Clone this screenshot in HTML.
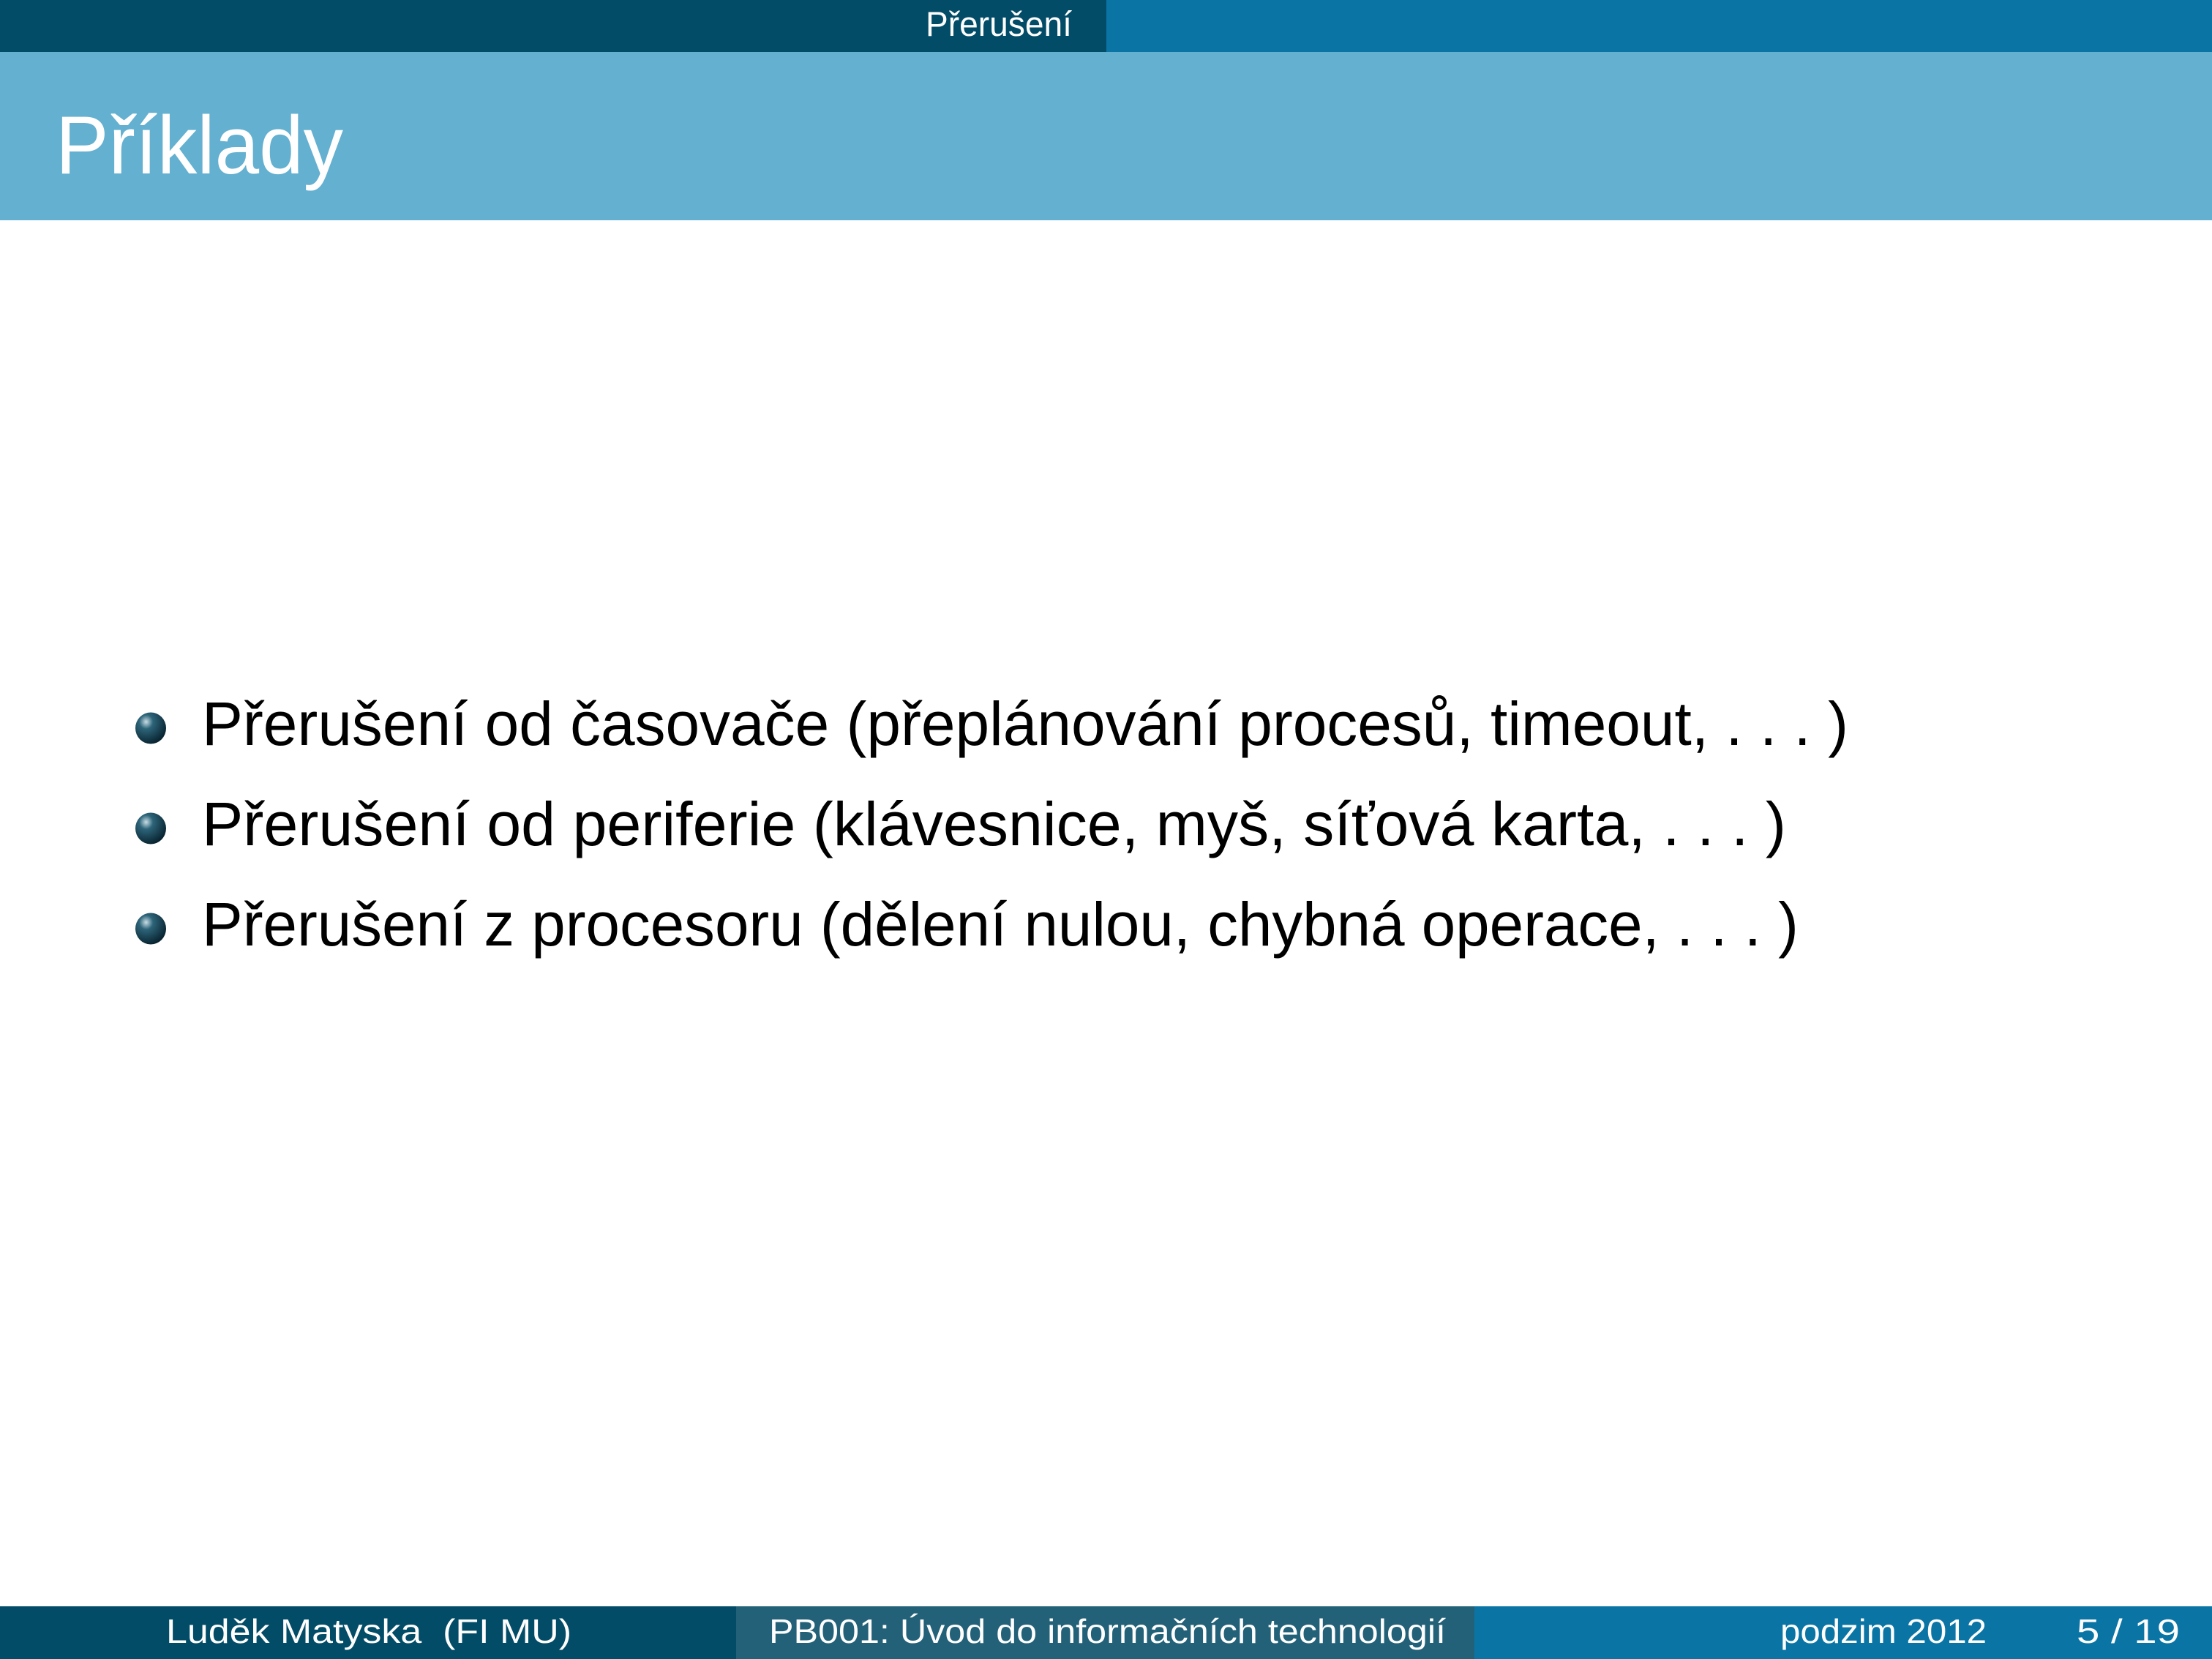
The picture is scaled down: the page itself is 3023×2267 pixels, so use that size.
<!DOCTYPE html>
<html><head><meta charset="utf-8">
<style>
html,body{margin:0;padding:0}
body{width:3023px;height:2267px;position:relative;overflow:hidden;background:#fff;font-family:"Liberation Sans","DejaVu Sans",sans-serif}
.r{position:absolute}
.t{position:absolute;white-space:nowrap;line-height:1;transform-origin:0 0}
.w{color:#fff}
</style></head><body>
<div class="r" style="left:0;top:0;width:1512px;height:71px;background:#034C67"></div>
<div class="r" style="left:1512px;top:0;width:1511px;height:71px;background:#0A75A5"></div>
<div class="r" style="left:0;top:71px;width:3023px;height:230px;background:#63B0D0"></div>
<div class="r" style="left:0;top:2195px;width:1006px;height:72px;background:#034C67"></div>
<div class="r" style="left:1006px;top:2195px;width:1009px;height:72px;background:#236178"></div>
<div class="r" style="left:2015px;top:2195px;width:1008px;height:72px;background:#0A75A5"></div>

<div class="t w" data-w="200" style="left:1265px;top:9px;font-size:47px">Přerušení</div>
<div class="t w" data-w="393" style="left:76px;top:143px;font-size:112px">Příklady</div>

<svg class="r" style="left:0;top:0" width="300" height="1400">
<defs><radialGradient id="g" cx="0.35" cy="0.3" r="0.75"><stop offset="0" stop-color="#c9dde5"/><stop offset="0.3" stop-color="#2d6479"/><stop offset="1" stop-color="#06202c"/></radialGradient></defs>
<ellipse cx="206" cy="995" rx="21" ry="21.5" fill="url(#g)"/>
<ellipse cx="206" cy="1132" rx="21" ry="21.5" fill="url(#g)"/>
<ellipse cx="206" cy="1269" rx="21" ry="21.5" fill="url(#g)"/>
</svg>
<div class="t" data-w="2250" style="left:276px;top:947px;font-size:84px">Přerušení od časovače (přeplánování procesů, timeout, . . . )</div>
<div class="t" data-w="2165" style="left:276px;top:1084px;font-size:84px">Přerušení od periferie (klávesnice, myš, síťová karta, . . . )</div>
<div class="t" data-w="2182" style="left:276px;top:1221px;font-size:84px">Přerušení z procesoru (dělení nulou, chybná operace, . . . )</div>

<div class="t w" data-w="554" style="left:227px;top:2206px;font-size:46px">Luděk Matyska&nbsp; (FI MU)</div>
<div class="t w" data-w="925" style="left:1051px;top:2206px;font-size:46px">PB001: Úvod do informačních technologií</div>
<div class="t w" data-w="282" style="left:2433px;top:2206px;font-size:46px">podzim 2012</div>
<div class="t w" data-w="141" style="left:2838px;top:2206px;font-size:46px">5 / 19</div>
<script>
document.querySelectorAll('[data-w]').forEach(function(e){
var w=e.getBoundingClientRect().width;var t=+e.getAttribute('data-w');
if(w>0)e.style.transform='scaleX('+(t/w)+')';});
</script>
</body></html>
